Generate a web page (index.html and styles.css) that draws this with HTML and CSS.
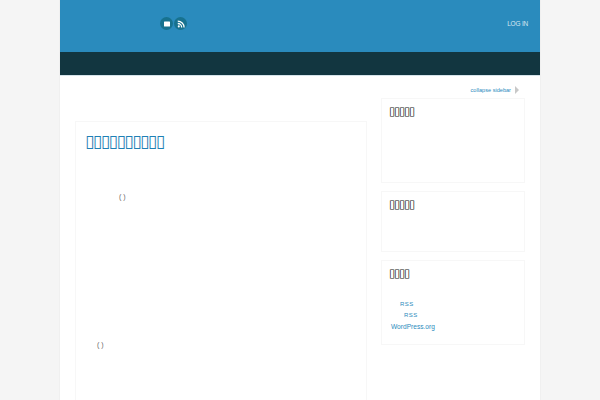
FILE: index.html
```html
<!DOCTYPE html>
<html lang="ja">
<head>
<meta charset="utf-8">
<title>Blog</title>
<link rel="stylesheet" href="styles.css">
</head>
<body>
<div class="wrap">
  <header class="masthead">
    <div class="social">
      <a class="social-btn" href="#"><svg viewBox="0 0 14 14" width="14" height="14"><rect x="3.5" y="4" width="7" height="6" rx="0.6" fill="#fff"/></svg></a>
      <a class="social-btn" href="#"><svg viewBox="0 0 14 14" width="14" height="14"><circle cx="4.4" cy="9.8" r="1.2" fill="#fff"/><path d="M3.2 6.4a4.6 4.6 0 0 1 4.6 4.6M3.2 3.6a7.4 7.4 0 0 1 7.4 7.4" fill="none" stroke="#fff" stroke-width="1.5"/></svg></a>
    </div>
    <a class="login" href="#">LOG IN</a>
  </header>
  <nav class="navbar"></nav>
  <div class="content">
    <main class="main">
      <article class="post">
        <h1 class="post-title">▯▯▯▯▯▯▯▯▯▯</h1>
        <p class="meta meta-first">( )</p>
        <p class="meta meta-second">( )</p>
      </article>
    </main>
    <aside class="sidebar">
      <div class="collapse"><a href="#">collapse sidebar</a><span class="arrow"></span></div>
      <section class="widget w1"><h2 class="widget-title">▯▯▯▯▯</h2></section>
      <section class="widget w2"><h2 class="widget-title">▯▯▯▯▯</h2></section>
      <section class="widget w3">
        <h2 class="widget-title">▯▯▯▯</h2>
        <ul class="links">
          <li class="l1"><a href="#">RSS</a></li>
          <li class="l2"><a href="#">RSS</a></li>
          <li class="l3"><a href="#">WordPress.org</a></li>
        </ul>
      </section>
    </aside>
  </div>
</div>
</body>
</html>
```
FILE: styles.css
```css
* { box-sizing: border-box; }
html, body { margin: 0; height: 100%; }
body { background: #f5f5f5; font-family: "Liberation Sans", Arial, sans-serif; overflow: hidden; }
a { text-decoration: none; color: #2a8bbd; }
.wrap { width: 482px; height: 400px; margin-left: 59px; background: #fff; border: 1px solid #f0f0f0; border-width: 0 1px; overflow: hidden; }
.masthead { height: 52px; background: #2a8bbd; display: flex; align-items: center; justify-content: space-between; padding: 0 12px 5px 100px; }
.social { display: flex; gap: 1px; }
.social-btn { width: 13px; height: 13px; border-radius: 50%; background: #17728f; display: flex; align-items: center; justify-content: center; }
.social-btn svg { width: 12px; height: 12px; }
.login { color: #d5e8f2; font-size: 6.5px; letter-spacing: -0.2px; }
.navbar { height: 24px; background: #123640; border-bottom: 1px solid #d5e3ea; }
.content { display: flex; padding: 0 15px; gap: 14px; }
.main { width: 292px; flex: none; padding-top: 45px; }
.post { height: 300px; border: 1px solid #f7f7f7; border-bottom: 0; padding: 10px 9px; }
.post-title { margin: 0; font-family: "DejaVu Sans", sans-serif; font-size: 17px; font-weight: 400; line-height: 18px; letter-spacing: -1.5px; color: #1f80b5; }
.meta { margin: 0; font-size: 7px; line-height: 10px; color: #666; }
.meta-first { padding: 42px 0 0 34px; }
.meta-second { padding: 138px 0 0 12px; }
.sidebar { width: 144px; flex: none; padding-top: 7px; }
.collapse { height: 15px; display: flex; justify-content: flex-end; align-items: center; gap: 4px; padding: 0 6px 2px 0; font-size: 5.6px; }
.arrow { width: 0; height: 0; border-left: 4px solid #c8c8c8; border-top: 4px solid transparent; border-bottom: 4px solid transparent; }
.widget { border: 1px solid #f7f7f7; padding: 6px 7px; margin-bottom: 8px; }
.w1 { height: 85px; }
.w2 { height: 61px; }
.w3 { height: 85px; }
.widget-title { margin: 0; font-family: "DejaVu Sans", sans-serif; font-size: 11.5px; font-weight: 400; line-height: 12px; letter-spacing: -1.3px; color: #111; }
.links { list-style: none; margin: 0; padding: 20px 0 0 1px; font-size: 6px; line-height: 11px; letter-spacing: 0.4px; }
.l1 { padding-left: 10px; }
.l2 { padding-left: 14px; }
.l3 { padding-left: 1px; font-size: 6.6px; letter-spacing: 0; }
```
